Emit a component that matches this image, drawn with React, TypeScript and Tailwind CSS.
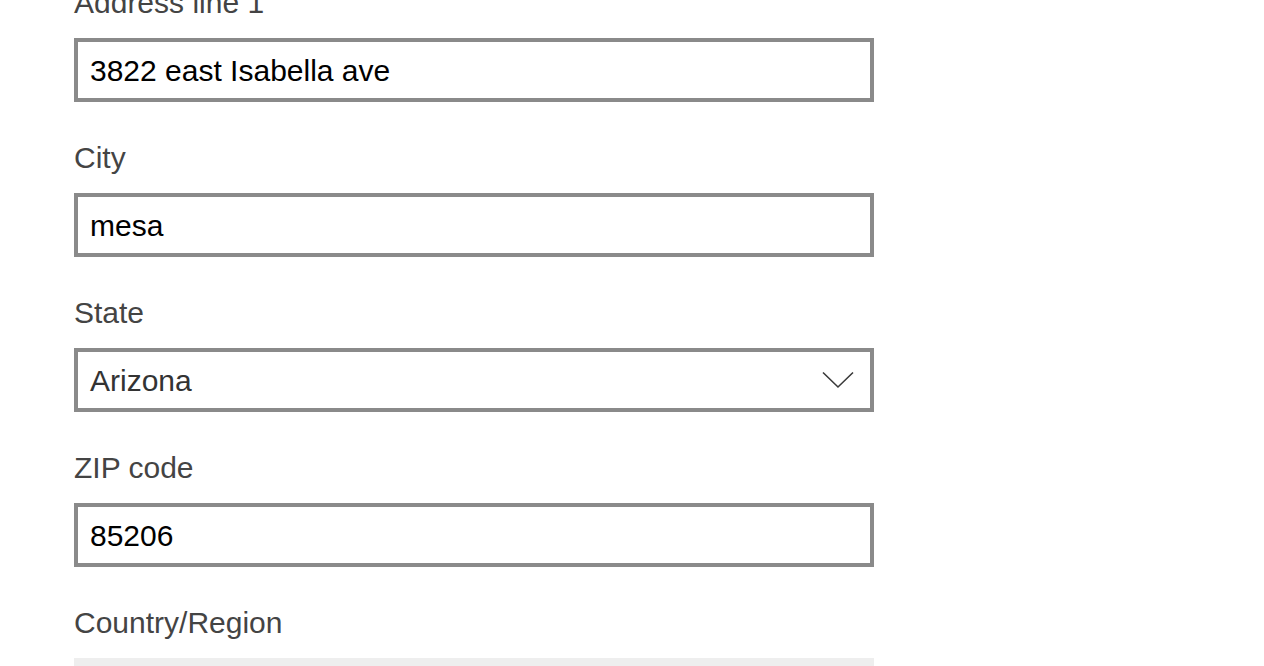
import React from 'react';

const font = { fontFamily: '"Liberation Sans", Arial, Helvetica, sans-serif' };

const Chevron = () => (
  <svg width="32" height="18" viewBox="0 0 32 18" fill="none" className="shrink-0">
    <path d="M1 1.5 L16 16 L31 1.5" stroke="#3a3a3a" strokeWidth="1.6" />
  </svg>
);

interface FieldProps {
  label: string;
  value?: string;
  select?: boolean;
  disabled?: boolean;
}

const Field: React.FC<FieldProps> = ({ label, value, select, disabled }) => (
  <div className="flex flex-col">
    <label className="mb-4 h-10 text-[30px] leading-[42px] text-[#444444]">{label}</label>
    {disabled ? (
      <div className="h-16 w-[800px] bg-[#eeeeee]" />
    ) : (
      <div className="flex h-16 w-[800px] items-center justify-between border-4 border-[#8a8a8a] bg-white pl-3 pr-4">
        <span className={select ? 'text-[30px] text-[#333333]' : 'text-[30px] text-black'}>{value}</span>
        {select && <Chevron />}
      </div>
    )}
  </div>
);

export default function App() {
  return (
    <div className="h-[666px] w-full overflow-hidden bg-white" style={font}>
      <div className="-mt-[18px] flex flex-col gap-[35px] pl-[74px]">
        <Field label="Address line 1" value="3822 east Isabella ave" />
        <Field label="City" value="mesa" />
        <Field label="State" value="Arizona" select />
        <Field label="ZIP code" value="85206" />
        <Field label="Country/Region" disabled />
      </div>
    </div>
  );
}
